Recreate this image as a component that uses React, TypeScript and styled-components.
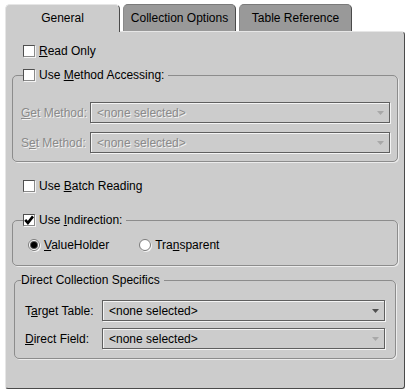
import styled, { createGlobalStyle } from "styled-components";

const GlobalStyle = createGlobalStyle`
    body {
        margin: 0;
        background: #fff;
        font-family: "Liberation Sans", Arial, sans-serif;
        font-size: 12px;
        color: #000;
    }
`

const Frame = styled.div`
    width: 408px;
    height: 392px;
    box-sizing: border-box;
    padding: 4px 0 0 5px;
`

const TabRow = styled.div`
    display: flex;
    gap: 3px;
    height: 27px;
`

const Tab = styled.div<{ $active?: boolean; $width: number }>`
    position: relative;
    z-index: ${p => (p.$active ? 1 : 0)};
    box-sizing: border-box;
    width: ${p => p.$width}px;
    height: ${p => (p.$active ? 28 : 27)}px;
    display: flex;
    align-items: center;
    justify-content: center;
    padding-bottom: ${p => (p.$active ? 1 : 0)}px;
    background: ${p => (p.$active ? "#cccccc" : "#999999")};
    border: 1px solid;
    border-bottom: 0;
    border-color: ${p => (p.$active ? "#e6e6e6 #4a4a4a #ccc #e6e6e6" : "#7a7a7a #4a4a4a #7a7a7a #8a8a8a")};
    border-radius: 5px 5px 0 0;
`

const Panel = styled.div`
    box-sizing: border-box;
    width: 400px;
    height: 358px;
    background: #cccccc;
    border: 1px solid;
    border-color: #e6e6e6 #4a4a4a #4a4a4a #e6e6e6;
    border-radius: 0 4px 3px 3px;
    display: flex;
    flex-direction: column;
`

const CheckRow = styled.label<{ $top: number }>`
    display: flex;
    align-items: center;
    gap: 4px;
    height: 14px;
    margin: ${p => p.$top}px 0 0 17px;
    line-height: 14px;
`

const Box = styled.span`
    box-sizing: border-box;
    width: 12px;
    height: 12px;
    flex: none;
    background: #fff;
    border: 1px solid;
    border-color: #4f4f4f #8a8a8a #8a8a8a #4f4f4f;
    box-shadow: 1px 1px 0 #f4f4f4;
    display: flex;
    align-items: center;
    justify-content: center;
`

const RadioCircle = styled.span`
    box-sizing: border-box;
    width: 12px;
    height: 12px;
    flex: none;
    border-radius: 50%;
    background: #fff;
    border: 1px solid #7a7a7a;
    box-shadow: 1px 1px 0 #f4f4f4;
    display: flex;
    align-items: center;
    justify-content: center;
`

const Dot = styled.span`
    width: 6px;
    height: 6px;
    border-radius: 50%;
    background: #000;
    box-shadow: 0 0 0 1px #555;
`

const Group = styled.fieldset<{ $side: number; $top: number }>`
    margin: ${p => p.$top}px ${p => p.$side}px 0 ${p => p.$side}px;
    padding: 0;
    min-inline-size: 0;
    border: 1px solid #8c8c8c;
    border-radius: 5px;
    box-shadow: 1px 1px 0 #ececec;
`

const Legend = styled.legend<{ $left: number; $padLeft?: number }>`
    margin-left: ${p => p.$left}px;
    padding: 0 4px 0 ${p => p.$padLeft ?? 0}px;
    height: 14px;
    line-height: 14px;
    display: flex;
    align-items: center;
    gap: 4px;
    background: #cccccc;
`

const GroupBody = styled.div<{ $pad: string; $gap: number }>`
    padding: ${p => p.$pad};
    display: flex;
    flex-direction: column;
    gap: ${p => p.$gap}px;
`

const FieldRow = styled.div`
    display: flex;
    align-items: center;
`

const FieldLabel = styled.span<{ $width: number; $disabled?: boolean }>`
    width: ${p => p.$width}px;
    flex: none;
    color: ${p => (p.$disabled ? "#8a8a8a" : "#000")};
    text-shadow: ${p => (p.$disabled ? "1px 1px 0 #f2f2f2" : "none")};
`

const Combo = styled.div<{ $disabled?: boolean }>`
    box-sizing: border-box;
    flex: 1;
    height: 21px;
    display: flex;
    align-items: center;
    padding: 0 4px 0 6px;
    border: 1px solid #5f5f5f;
    box-shadow: inset 1px 1px 0 #f4f4f4, 1px 1px 0 #f4f4f4;
    color: ${p => (p.$disabled ? "#8a8a8a" : "#000")};
    text-shadow: ${p => (p.$disabled ? "1px 1px 0 #f2f2f2" : "none")};
    svg {
        margin-left: auto;
    }
`

const RadioRow = styled.div`
    display: flex;
    align-items: center;
    gap: 30px;
    height: 14px;
    padding-left: 15px;
`

const Radio = styled.label`
    display: flex;
    align-items: center;
    gap: 4px;
    line-height: 14px;
`

const Key = styled.span`
    text-decoration: underline;
    text-underline-offset: 1px;
`

function Check({ on }: { on?: boolean }) {
    return (
        <Box>
            {on ? (
                <svg width="10" height="10" viewBox="0 0 10 10">
                    <path d="M1.2 4.8 L3.9 7.9 L9 1.4" fill="none" stroke="#000" strokeWidth="2.6" />
                </svg>
            ) : null}
        </Box>
    )
}

function Arrow({ color }: { color: string }) {
    return (
        <svg width="8" height="4" viewBox="0 0 8 4">
            <polygon points="0,0 7,0 3.5,4" fill={color} />
        </svg>
    )
}

export default function App() {
    return (
        <Frame>
            <GlobalStyle />
            <TabRow>
                <Tab $active $width={115}>General</Tab>
                <Tab $width={113}>Collection Options</Tab>
                <Tab $width={113}>Table Reference</Tab>
            </TabRow>
            <Panel>
                <CheckRow $top={12}>
                    <Check />
                    <span><Key>R</Key>ead Only</span>
                </CheckRow>

                <Group $side={6} $top={10}>
                    <Legend $left={10}>
                        <Check />
                        <span>Use <Key>M</Key>ethod Accessing:</span>
                    </Legend>
                    <GroupBody $pad="20px 7px 8px 8px" $gap={9}>
                        <FieldRow>
                            <FieldLabel $width={69} $disabled><Key>G</Key>et Method:</FieldLabel>
                            <Combo $disabled>&lt;none selected&gt;<Arrow color="#a8a8a8" /></Combo>
                        </FieldRow>
                        <FieldRow>
                            <FieldLabel $width={69} $disabled>S<Key>e</Key>t Method:</FieldLabel>
                            <Combo $disabled>&lt;none selected&gt;<Arrow color="#a8a8a8" /></Combo>
                        </FieldRow>
                    </GroupBody>
                </Group>

                <CheckRow $top={17}>
                    <Check />
                    <span>Use <Key>B</Key>atch Reading</span>
                </CheckRow>

                <Group $side={6} $top={20}>
                    <Legend $left={10}>
                        <Check on />
                        <span>Use <Key>I</Key>ndirection:</span>
                    </Legend>
                    <GroupBody $pad="11px 0 13px 0" $gap={0}>
                        <RadioRow>
                            <Radio>
                                <RadioCircle><Dot /></RadioCircle>
                                <span><Key>V</Key>alueHolder</span>
                            </Radio>
                            <Radio>
                                <RadioCircle />
                                <span>Tra<Key>n</Key>sparent</span>
                            </Radio>
                        </RadioRow>
                    </GroupBody>
                </Group>

                <Group $side={8} $top={7}>
                    <Legend $left={6}>
                        <span>Direct Collection Specifics</span>
                    </Legend>
                    <GroupBody $pad="13px 10px 9px 10px" $gap={7}>
                        <FieldRow>
                            <FieldLabel $width={77}>T<Key>a</Key>rget Table:</FieldLabel>
                            <Combo>&lt;none selected&gt;<Arrow color="#505050" /></Combo>
                        </FieldRow>
                        <FieldRow>
                            <FieldLabel $width={77}><Key>D</Key>irect Field:</FieldLabel>
                            <Combo>&lt;none selected&gt;<Arrow color="#a8a8a8" /></Combo>
                        </FieldRow>
                    </GroupBody>
                </Group>
            </Panel>
        </Frame>
    )
}
